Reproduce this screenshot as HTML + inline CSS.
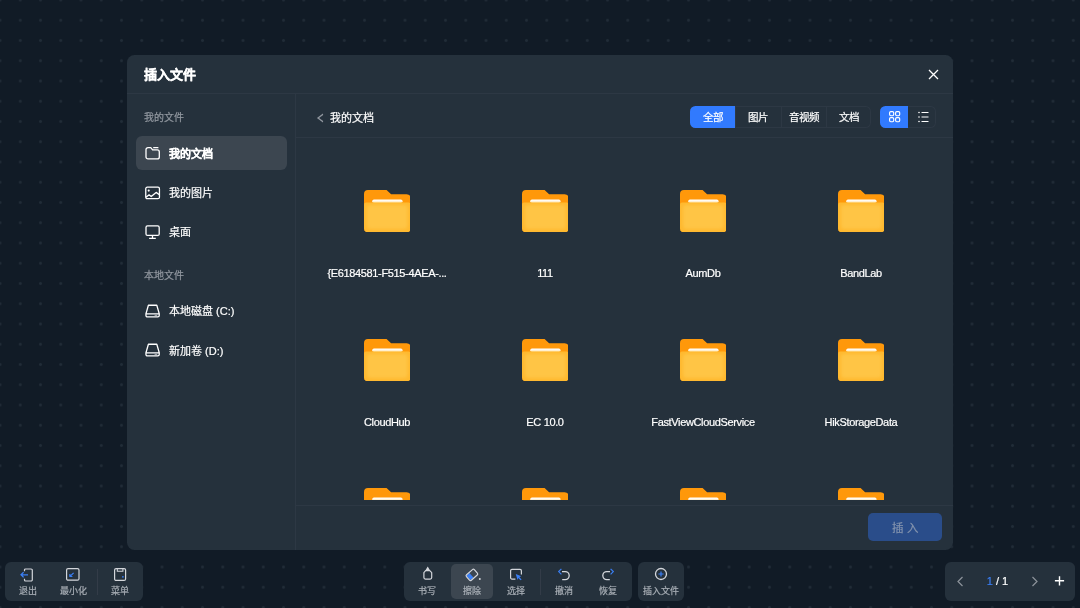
<!DOCTYPE html>
<html lang="zh-CN">
<head>
<meta charset="utf-8">
<style>
*{margin:0;padding:0;box-sizing:border-box;}
html,body{width:1080px;height:608px;overflow:hidden;}
body{position:relative;background-color:#111b26;
  background-image:radial-gradient(circle at center,#212c37 0,#212c37 0.9px,rgba(33,44,55,0) 2px);
  background-size:20.25px 20.25px;background-position:-10.125px -10.125px;
  font-family:"Liberation Sans",sans-serif;color:#fff;-webkit-text-stroke:0.2px currentColor;}
.abs{position:absolute;}
.dlg{left:127px;top:55px;width:826px;height:495px;background:#25313c;border-radius:7.5px;overflow:hidden;}
.hd-line{left:0;top:38px;width:826px;height:1px;background:#2d3844;}
.title{left:17px;top:12px;font-size:13px;font-weight:bold;-webkit-text-stroke:0.3px #fff;line-height:16px;white-space:nowrap;}
.close{left:801px;top:14px;width:11px;height:11px;}
.side-line{left:168px;top:39px;width:1px;height:456px;background:#2d3844;}
.grp{font-size:10px;color:#949aa2;line-height:15px;white-space:nowrap;left:17px;}
.item{left:9px;width:151px;height:34px;border-radius:6px;}
.item.act{background:#3c4650;}
.item svg{position:absolute;left:8px;top:9px;}
.item svg *{vector-effect:none;}
.item span{position:absolute;left:33px;top:9.5px;font-size:11px;line-height:16px;white-space:nowrap;}
.item.act span{font-weight:bold;-webkit-text-stroke:0.25px #fff;}
.bar-line{left:169px;top:82px;width:657px;height:1px;background:#2d3844;}
.crumb{left:203px;top:54.5px;font-size:11px;line-height:16px;white-space:nowrap;}
.tabs{left:563px;top:50.5px;width:181.25px;height:22.5px;border-radius:5.5px;box-shadow:inset 0 0 0 1px #2d3844;overflow:hidden;display:flex;}
.tab{width:45.3px;height:100%;font-size:10.5px;line-height:23px;text-align:center;border-left:1px solid #2d3844;white-space:nowrap;}
.tab:first-child{border-left:none;}
.tab.on{background:#317afe;}
.views{left:753px;top:50.5px;width:56.25px;height:22.5px;border-radius:5.5px;box-shadow:inset 0 0 0 1px #2d3844;overflow:hidden;display:flex;}
.vw{width:28px;height:100%;position:relative;}
.vw+.vw{box-shadow:none;}
.vw.on{background:#317afe;}
.grid{left:169px;top:83px;width:657px;height:362px;overflow:hidden;}
.cell{position:absolute;width:158px;}
.cell svg{position:absolute;left:55.7px;top:0;}
.cell .lbl{position:absolute;left:0;width:158px;top:75.5px;text-align:center;font-size:11px;letter-spacing:-0.35px;line-height:14px;white-space:nowrap;}
.ft-line{left:169px;top:450px;width:657px;height:1px;background:#2d3844;}
.btn{left:741px;top:458px;width:74px;height:28px;border-radius:5px;background:#2a4d8a;color:#8494ae;font-size:11.5px;line-height:30px;text-align:center;letter-spacing:3.5px;text-indent:3.5px;}
.tb{background:#25313c;border-radius:6px;top:562px;height:39px;}
.ti{position:absolute;top:0;height:39px;}
.ti svg{position:absolute;left:50%;transform:translateX(-50%);top:5px;}
.ti span{position:absolute;left:0;right:0;top:23px;text-align:center;font-size:9px;line-height:12px;color:#aab0b7;white-space:nowrap;}
.vsep{position:absolute;width:1px;background:#333c48;top:7px;height:26px;}
.dlg,.tb{will-change:transform;}
</style>
</head>
<body>
<svg width="0" height="0" style="position:absolute">
<defs>
<linearGradient id="wg" x1="0" y1="0" x2="0" y2="1"><stop offset="0" stop-color="#fff"/><stop offset=".35" stop-color="#fffaf0"/><stop offset="1" stop-color="#ffd98c"/></linearGradient>
<linearGradient id="fg" x1="0" y1="0" x2="0" y2="1"><stop offset="0" stop-color="#ffc84a"/><stop offset="1" stop-color="#ffbe35"/></linearGradient>
<filter id="fblur" x="-20%" y="-20%" width="140%" height="140%"><feGaussianBlur stdDeviation="1.6"/></filter>
<symbol id="fold" viewBox="0 0 46.6 42.2">
<path d="M0 4A4 4 0 0 1 4 0H22.6L27.1 4.3H42.6A4 4 0 0 1 46.6 8.3V38.2A4 4 0 0 1 42.6 42.2H4A4 4 0 0 1 0 38.2Z" fill="#ff980a"/>
<rect x="8.2" y="9.5" width="30.4" height="3.6" rx="1.8" fill="url(#wg)"/>
<path d="M0 14.5A2 2 0 0 1 2 12.5H44.6A2 2 0 0 1 46.6 14.5V38.2A4 4 0 0 1 42.6 42.2H4A4 4 0 0 1 0 38.2Z" fill="#ffb92f"/>
<rect x="3" y="15" width="40.6" height="24" rx="4" fill="#ffc545" filter="url(#fblur)"/>
</symbol>
</defs></svg>
<div class="abs dlg">
  <div class="abs title">插入文件</div>
  <svg class="abs close" viewBox="0 0 11 11" width="11" height="11"><path d="M1 1L10 10M10 1L1 10" stroke="#fff" stroke-width="1.3" fill="none"/></svg>
  <div class="abs hd-line"></div>
  <div class="abs side-line"></div>

  <div class="abs grp" style="top:55px;">我的文件</div>
  <div class="abs item act" style="top:81px;">
    <svg width="17" height="16" viewBox="0 0 17 16"><path d="M2 4.6A2 2 0 0 1 4 2.6H6.8L8.6 4.9H13.3A2 2 0 0 1 15.3 6.9V11.9A2 2 0 0 1 13.3 13.9H4A2 2 0 0 1 2 11.9ZM9.2 2.6H14.4" stroke="#fff" stroke-width="1.3" fill="none" stroke-linejoin="round"/></svg>
    <span>我的文档</span>
  </div>
  <div class="abs item" style="top:120.5px;">
    <svg width="17" height="16" viewBox="0 0 17 16"><rect x="1.75" y="2.15" width="13.7" height="11.5" rx="1.5" stroke="#fff" stroke-width="1.3" fill="none" stroke-linejoin="round"/><path d="M2 12.3L5.1 9.8 7.2 11.5 12.1 7.4 15.4 9.7" stroke="#fff" stroke-width="1.3" fill="none" stroke-linejoin="round"/><circle cx="4.7" cy="5.6" r="1.05" fill="#fff"/></svg>
    <span>我的图片</span>
  </div>
  <div class="abs item" style="top:159px;">
    <svg width="17" height="16" viewBox="0 0 17 16"><rect x="2" y="2.95" width="13.2" height="9.5" rx="1.5" stroke="#fff" stroke-width="1.3" fill="none" stroke-linejoin="round"/><path d="M8.5 12.6V15.2M5.1 15.3H11.8" stroke="#fff" stroke-width="1.3" fill="none" stroke-linejoin="round"/></svg>
    <span>桌面</span>
  </div>
  <div class="abs grp" style="top:213px;">本地文件</div>
  <div class="abs item" style="top:238.5px;">
    <svg width="17" height="16" viewBox="0 0 17 16"><path d="M1.95 10.8L4.4 2.25H12.8L15.25 10.8V12.5A1.45 1.45 0 0 1 13.8 13.95H3.4A1.45 1.45 0 0 1 1.95 12.5ZM1.95 10.8H15.25" stroke="#fff" stroke-width="1.3" fill="none" stroke-linejoin="round"/><path d="M10.6 12.4H13.2" stroke="#fff" stroke-width="1" opacity=".6"/></svg>
    <span>本地磁盘 (C:)</span>
  </div>
  <div class="abs item" style="top:278px;">
    <svg width="17" height="16" viewBox="0 0 17 16"><path d="M1.95 10.8L4.4 2.25H12.8L15.25 10.8V12.5A1.45 1.45 0 0 1 13.8 13.95H3.4A1.45 1.45 0 0 1 1.95 12.5ZM1.95 10.8H15.25" stroke="#fff" stroke-width="1.3" fill="none" stroke-linejoin="round"/><path d="M10.6 12.4H13.2" stroke="#fff" stroke-width="1" opacity=".6"/></svg>
    <span>新加卷 (D:)</span>
  </div>

  <svg class="abs" style="left:189px;top:57.5px" width="8" height="10" viewBox="0 0 8 10"><path d="M6.9 .4L7.2 1.9 3.1 4.9 7.2 7.9 6.9 9.4 .9 4.9Z" fill="#8f959d"/></svg><div class="abs crumb">我的文档</div>
  <div class="abs tabs">
    <div class="tab on">全部</div><div class="tab">图片</div><div class="tab">音视频</div><div class="tab">文档</div>
  </div>
  <div class="abs views">
    <div class="vw on"><svg style="position:absolute;left:8.5px;top:5.5px" width="12" height="12" viewBox="0 0 12 12"><rect x=".6" y=".6" width="4.1" height="4.1" rx="1.2" stroke="#fff" stroke-width="1.15" fill="none"/><rect x="6.6" y=".6" width="4.1" height="4.1" rx="1.2" stroke="#fff" stroke-width="1.15" fill="none"/><rect x=".6" y="6.6" width="4.1" height="4.1" rx="1.2" stroke="#fff" stroke-width="1.15" fill="none"/><rect x="6.6" y="6.6" width="4.1" height="4.1" rx="1.2" stroke="#fff" stroke-width="1.15" fill="none"/></svg></div>
    <div class="vw"><svg style="position:absolute;left:9.5px;top:5.5px" width="12" height="12" viewBox="0 0 12 12"><path d="M3.5 1.5h7M3.5 6h7M3.5 10.5h7" stroke="#fff" stroke-width="1.1"/><circle cx="1" cy="1.5" r=".8" fill="#fff"/><circle cx="1" cy="6" r=".8" fill="#fff"/><circle cx="1" cy="10.5" r=".8" fill="#fff"/></svg></div>
  </div>

  <div class="abs bar-line"></div>
  <div class="abs grid">
<div class="cell" style="left:12px;top:52px;"><svg width="46.6" height="42.2"><use href="#fold"/></svg><div class="lbl">{E6184581-F515-4AEA-...</div></div>
<div class="cell" style="left:170px;top:52px;"><svg width="46.6" height="42.2"><use href="#fold"/></svg><div class="lbl">111</div></div>
<div class="cell" style="left:328px;top:52px;"><svg width="46.6" height="42.2"><use href="#fold"/></svg><div class="lbl">AumDb</div></div>
<div class="cell" style="left:486px;top:52px;"><svg width="46.6" height="42.2"><use href="#fold"/></svg><div class="lbl">BandLab</div></div>
<div class="cell" style="left:12px;top:201px;"><svg width="46.6" height="42.2"><use href="#fold"/></svg><div class="lbl">CloudHub</div></div>
<div class="cell" style="left:170px;top:201px;"><svg width="46.6" height="42.2"><use href="#fold"/></svg><div class="lbl">EC 10.0</div></div>
<div class="cell" style="left:328px;top:201px;"><svg width="46.6" height="42.2"><use href="#fold"/></svg><div class="lbl">FastViewCloudService</div></div>
<div class="cell" style="left:486px;top:201px;"><svg width="46.6" height="42.2"><use href="#fold"/></svg><div class="lbl">HikStorageData</div></div>
<div class="cell" style="left:12px;top:350px;"><svg width="46.6" height="42.2"><use href="#fold"/></svg><div class="lbl"></div></div>
<div class="cell" style="left:170px;top:350px;"><svg width="46.6" height="42.2"><use href="#fold"/></svg><div class="lbl"></div></div>
<div class="cell" style="left:328px;top:350px;"><svg width="46.6" height="42.2"><use href="#fold"/></svg><div class="lbl"></div></div>
<div class="cell" style="left:486px;top:350px;"><svg width="46.6" height="42.2"><use href="#fold"/></svg><div class="lbl"></div></div>
</div>
  <div class="abs ft-line"></div>
  <div class="abs btn">插入</div>
</div>

<!-- bottom toolbars -->
<div class="abs tb" style="left:5px;width:138px;">
  <div class="ti" style="left:0;width:45px;">
    <svg width="16" height="14" viewBox="0 0 16 14" style="top:5.5px;left:21px"><path d="M6.5 3.3V2a1 1 0 0 1 1-1h5.6a1.2 1.2 0 0 1 1.2 1.2v9.6a1.2 1.2 0 0 1-1.2 1.2H7.5a1 1 0 0 1-1-1v-1.3" stroke="#d3d6db" stroke-width="1.2" fill="none"/><path d="M10 6.8H3M5.6 4.2L3 6.8l2.6 2.6" stroke="#3a7ff5" stroke-width="1.3" fill="none"/></svg>
    <span>退出</span>
  </div>
  <div class="ti" style="left:45px;width:46.5px;">
    <svg width="16" height="14" viewBox="0 0 16 14" style="top:5.5px"><rect x="1.6" y=".6" width="12.4" height="11.6" rx="1.5" stroke="#d3d6db" stroke-width="1.2" fill="none"/><path d="M8.6 4.8L5 8.4M4.9 6V8.5H7.4" stroke="#3a7ff5" stroke-width="1.2" fill="none"/></svg>
    <span>最小化</span>
  </div>
  <div class="vsep" style="left:91.5px;"></div>
  <div class="ti" style="left:92px;width:45.5px;">
    <svg width="14" height="14" viewBox="0 0 14 14" style="top:5.5px"><rect x="1.6" y=".6" width="11" height="11.8" rx="1.5" stroke="#d3d6db" stroke-width="1.2" fill="none"/><path d="M4.3 .8v2.5h5.6V.8" stroke="#d3d6db" stroke-width="1.1" fill="none"/><circle cx="9.9" cy="8.8" r=".9" fill="#3a7ff5"/></svg>
    <span>菜单</span>
  </div>
</div>
<div class="abs tb" style="left:404px;width:228px;">
  <div class="abs" style="left:46.5px;top:2px;width:42px;height:35px;background:#3c4650;border-radius:5px;"></div>
  <div class="ti" style="left:0;width:46px;">
    <svg width="12" height="15" viewBox="0 0 12 15" style="top:4px;left:calc(50% + 0.7px)"><path d="M5.7 .4L8.1 4.4H3.3z" fill="#d3d6db"/><path d="M3.6 4.7H7.8L9.7 6.6V11.6A1.5 1.5 0 0 1 8.2 13.1H3.4A1.5 1.5 0 0 1 1.9 11.6V6.6Z" stroke="#d3d6db" stroke-width="1.2" fill="none" stroke-linejoin="round"/></svg>
    <span>书写</span>
  </div>
  <div class="ti" style="left:46px;width:43px;">
    <svg width="18" height="15" viewBox="0 0 18 15" style="top:4.5px"><g transform="translate(8.9 7.9) rotate(-41.5)"><path d="M-0.6 -3.0V3.0H-3.9A1 1 0 0 1 -4.65 2.2V-2.2A1 1 0 0 1 -3.9 -3.0Z" fill="#3a7ff5"/><rect x="-5.25" y="-3.6" width="10.5" height="7.2" rx="1.3" stroke="#d3d6db" stroke-width="1.2" fill="none"/></g><circle cx="16.8" cy="12" r="1" fill="#d3d6db"/></svg>
    <span>擦除</span>
  </div>
  <div class="ti" style="left:89px;width:46px;">
    <svg width="14" height="13" viewBox="0 0 14 13" style="top:6px"><path d="M6.4 11.1H3A1.4 1.4 0 0 1 1.6 9.7V2.7A1.4 1.4 0 0 1 3 1.3H11A1.4 1.4 0 0 1 12.4 2.7V6.4" stroke="#d3d6db" stroke-width="1.2" fill="none"/><path d="M6.7 6L12.3 8.2 10.3 9.1 12.6 11.4 11.5 12.2 9.3 9.9 8.6 12z" fill="#3a7ff5"/></svg>
    <span>选择</span>
  </div>
  <div class="vsep" style="left:136px;"></div>
  <div class="ti" style="left:137px;width:46px;">
    <svg width="14" height="14" viewBox="0 0 14 14" style="top:5px"><path d="M5 4.6H8.2A4 4 0 0 1 8.2 12.6H5.2" stroke="#d3d6db" stroke-width="1.3" fill="none"/><path d="M4.4 1.9L1.7 4.6 4.4 7.4" stroke="#3a7ff5" stroke-width="1.2" fill="none"/></svg>
    <span>撤消</span>
  </div>
  <div class="ti" style="left:181px;width:46px;">
    <svg width="14" height="14" viewBox="0 0 14 14" style="top:5px"><path d="M9 4.6H5.8A4 4 0 0 0 5.8 12.6H8.8" stroke="#d3d6db" stroke-width="1.3" fill="none"/><path d="M9.6 1.9L12.3 4.6 9.6 7.4" stroke="#3a7ff5" stroke-width="1.2" fill="none"/></svg>
    <span>恢复</span>
  </div>
</div>
<div class="abs tb" style="left:638px;width:46px;">
  <div class="ti" style="left:0;width:46px;">
    <svg width="14" height="14" viewBox="0 0 14 14" style="top:5px"><circle cx="7" cy="7" r="5.5" stroke="#d3d6db" stroke-width="1.3" fill="none"/><path d="M7 4.4v5.2M4.4 7h5.2" stroke="#3a7ff5" stroke-width="1.2"/></svg>
    <span>插入文件</span>
  </div>
</div>
<div class="abs tb" style="left:945px;width:130px;">
  <svg class="abs" style="left:11px;top:14px" width="8" height="11" viewBox="0 0 8 11"><path d="M6.5 1L2 5.5 6.5 10" stroke="#8d939b" stroke-width="1.2" fill="none"/></svg>
  <div class="abs" style="left:30px;top:12px;width:45px;text-align:center;font-size:11px;line-height:14px;"><span style="color:#3a7ff5">1</span> / 1</div>
  <svg class="abs" style="left:86px;top:14px" width="8" height="11" viewBox="0 0 8 11"><path d="M1.5 1L6 5.5 1.5 10" stroke="#8d939b" stroke-width="1.2" fill="none"/></svg>
  <svg class="abs" style="left:109px;top:13px" width="12" height="12" viewBox="0 0 12 12"><path d="M5.5 1.2v9.2M.9 5.8h9.2" stroke="#fff" stroke-width="1.4"/></svg>
</div>
</body>
</html>
